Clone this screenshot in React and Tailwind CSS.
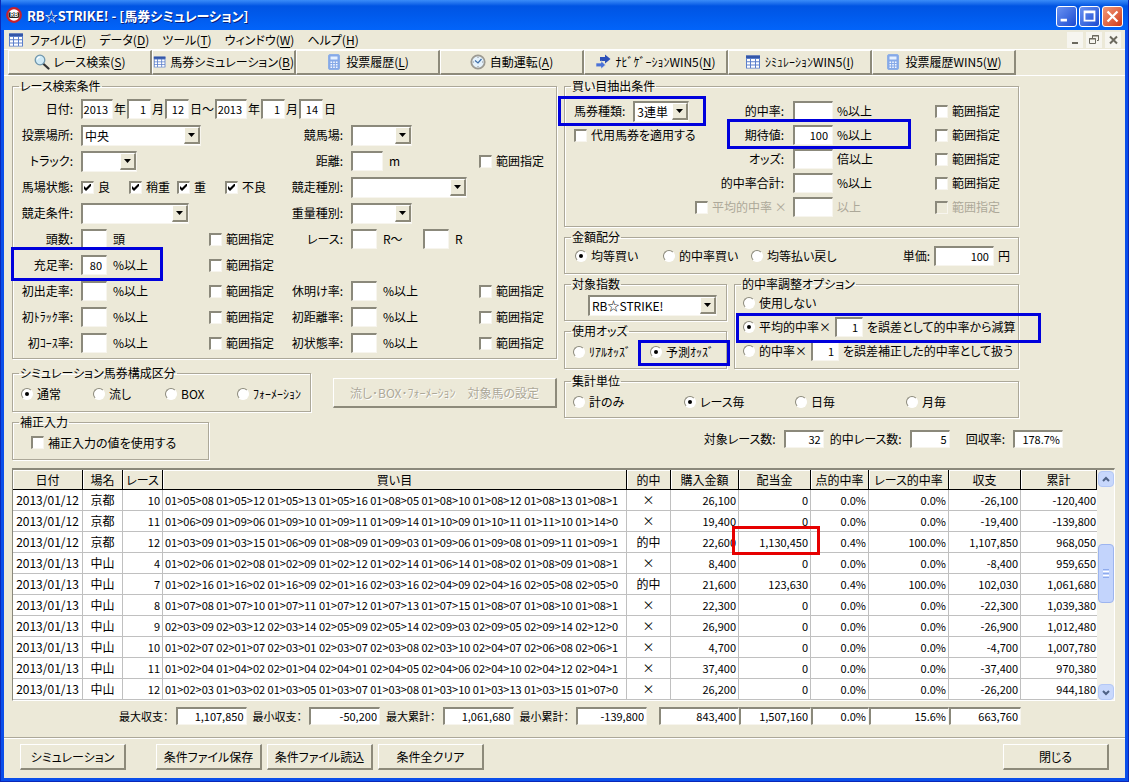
import { useId } from 'react';

const toolbar = [
  { text: 'レース検索', hotkey: 'S', icon: 'search' },
  { text: '馬券シミュレーション', hotkey: 'B', icon: 'grid' },
  { text: '投票履歴', hotkey: 'L', icon: 'calc' },
  { text: '自動運転', hotkey: 'A', icon: 'clock' },
  { text: 'ﾅﾋﾞｹﾞｰｼｮﾝWIN5', hotkey: 'N', icon: 'arrows' },
  { text: 'ｼﾐｭﾚｰｼｮﾝWIN5', hotkey: 'I', icon: 'grid' },
  { text: '投票履歴WIN5', hotkey: 'W', icon: 'calc' },
];

const menus = [
  ['ファイル', 'F'],
  ['データ', 'D'],
  ['ツール', 'T'],
  ['ウィンドウ', 'W'],
  ['ヘルプ', 'H'],
];

const rows = [
  ['2013/01/12', '京都', '10', '01>05>08 01>05>12 01>05>13 01>05>16 01>08>05 01>08>10 01>08>12 01>08>13 01>08>1', '×', '26,100', '0', '0.0%', '0.0%', '-26,100', '-120,400'],
  ['2013/01/12', '京都', '11', '01>06>09 01>09>06 01>09>10 01>09>11 01>09>14 01>10>09 01>10>11 01>11>10 01>14>0', '×', '19,400', '0', '0.0%', '0.0%', '-19,400', '-139,800'],
  ['2013/01/12', '京都', '12', '01>03>09 01>03>15 01>06>09 01>08>09 01>09>03 01>09>06 01>09>08 01>09>11 01>09>1', '的中', '22,600', '1,130,450', '0.4%', '100.0%', '1,107,850', '968,050'],
  ['2013/01/13', '中山', '4', '01>02>06 01>02>08 01>02>09 01>02>12 01>02>14 01>06>14 01>08>02 01>08>09 01>08>1', '×', '8,400', '0', '0.0%', '0.0%', '-8,400', '959,650'],
  ['2013/01/13', '中山', '7', '01>02>16 01>16>02 01>16>09 02>01>16 02>03>16 02>04>09 02>04>16 02>05>08 02>05>0', '的中', '21,600', '123,630', '0.4%', '100.0%', '102,030', '1,061,680'],
  ['2013/01/13', '中山', '8', '01>07>08 01>07>10 01>07>11 01>07>12 01>07>13 01>07>15 01>08>07 01>08>10 01>08>1', '×', '22,300', '0', '0.0%', '0.0%', '-22,300', '1,039,380'],
  ['2013/01/13', '中山', '9', '02>03>09 02>03>12 02>03>14 02>05>09 02>05>14 02>09>03 02>09>05 02>09>14 02>12>0', '×', '26,900', '0', '0.0%', '0.0%', '-26,900', '1,012,480'],
  ['2013/01/13', '中山', '10', '01>02>07 02>01>07 02>03>01 02>03>07 02>03>08 02>03>10 02>04>07 02>06>08 02>06>1', '×', '4,700', '0', '0.0%', '0.0%', '-4,700', '1,007,780'],
  ['2013/01/13', '中山', '11', '01>02>04 01>04>02 02>01>04 02>04>01 02>04>05 02>04>06 02>04>10 02>04>12 02>04>1', '×', '37,400', '0', '0.0%', '0.0%', '-37,400', '970,380'],
  ['2013/01/13', '中山', '12', '01>02>03 01>03>02 01>03>05 01>03>07 01>03>08 01>03>10 01>03>13 01>03>15 01>07>0', '×', '26,200', '0', '0.0%', '0.0%', '-26,200', '944,180'],
];

const columns = [
  ['日付', 'w-[70px]'],
  ['場名', 'w-[40px]'],
  ['レース', 'w-[40px]'],
  ['買い目', ''],
  ['的中', 'w-[44px]'],
  ['購入金額', 'w-[68px]'],
  ['配当金', 'w-[72px]'],
  ['点的中率', 'w-[58px]'],
  ['レース的中率', 'w-[80px]'],
  ['収支', 'w-[72px]'],
  ['累計', 'w-[76px]'],
];

const raised =
  'bg-[#ece9d8] border-t border-l border-white border-r-2 border-b-2 border-r-[#8d8a7a] border-b-[#8d8a7a]';
const sunken =
  'bg-white border-t-2 border-l-2 border-t-[#8b897b] border-l-[#8b897b] border-r border-b border-r-[#f7f5ee] border-b-[#f7f5ee]';

function Icon({ name }) {
  if (name === 'search')
    return (
      <svg viewBox="0 0 16 16" className="h-4 w-4">
        <path d="M9 9.500l5.500 5" stroke="#333" strokeWidth="2.200" strokeLinecap="round" />
        <circle cx="6" cy="6" r="4.800" fill="#cfeaf6" stroke="#6f96ad" strokeWidth="1.300" />
        <path d="M3.200 5.500a3 3 0 0 1 3-2.500" stroke="#fff" strokeWidth="1.200" fill="none" />
      </svg>
    );
  if (name === 'grid')
    return (
      <svg viewBox="0 0 16 16" className="h-4 w-4">
        <rect x="1" y="1.500" width="14" height="13" fill="#5b7fcb" />
        <rect x="1" y="1.500" width="14" height="2.500" fill="#3457a8" />
        <g fill="#fff">
          <path d="M2 5h3v2.300H2zM6 5h4v2.300H6zM11 5h3v2.300h-3z" />
          <path d="M2 8.200h3v2.300H2zM6 8.200h4v2.300H6zM11 8.200h3v2.300h-3z" />
          <path d="M2 11.400h3v2.300H2zM6 11.400h4v2.300H6zM11 11.400h3v2.300h-3z" />
        </g>
      </svg>
    );
  if (name === 'calc')
    return (
      <svg viewBox="0 0 16 16" className="h-4 w-4">
        <rect x="2.500" y=".5" width="11" height="15" rx="1.500" fill="#86a9e8" stroke="#8fb0e6" />
        <rect x="4.500" y="2.500" width="7" height="3" fill="#e6f1ff" />
        <g fill="#f4f8ff">
          <path d="M4.500 7.500h1.600v1.500H4.500zM7.200 7.500h1.600v1.500H7.200zM9.900 7.500h1.600v1.500H9.900z" />
          <path d="M4.500 10h1.600v1.500H4.500zM7.200 10h1.600v1.500H7.200zM9.900 10h1.600v1.500H9.900z" />
          <path d="M4.500 12.500h1.600v1.500H4.500zM7.200 12.500h1.600v1.500H7.200zM9.900 12.500h1.600v1.500H9.900z" />
        </g>
      </svg>
    );
  if (name === 'clock')
    return (
      <svg viewBox="0 0 16 16" className="h-4 w-4">
        <circle cx="8" cy="8" r="6.700" fill="#e4f1fb" stroke="#9c9a92" strokeWidth="1.800" />
        <path d="M5 6.500L8 9l3.500-4" fill="none" stroke="#3d6ea8" strokeWidth="1.200" />
        <path d="M8 2.800v1M8 12.200v1M2.800 8h1M12.200 8h1" stroke="#777" />
      </svg>
    );
  return (
    <svg viewBox="0 0 16 16" className="h-4 w-4">
      <path d="M5 3h5V.5l5.500 4.500L10 9.500V7H5z" fill="#2c50b8" />
      <path d="M1 9h5V6.800l4.500 4.100L6 15v-2.200H1z" fill="#4a72d8" stroke="#ece9d8" strokeWidth=".6" />
    </svg>
  );
}

function Hotkey({ text, hotkey }) {
  return (
    <span className="whitespace-nowrap">
      {text}(<u className="underline-offset-2">{hotkey}</u>)
    </span>
  );
}

function Group({ title, className = '', children }) {
  return (
    <fieldset
      className={`min-w-0 border border-[#aca899] px-0 shadow-[1px_1px_0_#fff,inset_1px_1px_0_#fff] ${className}`}
    >
      <legend className="ml-1.5 px-px leading-3">{title}</legend>
      {children}
    </fieldset>
  );
}

function Mark({ className }) {
  return <span aria-hidden="true" className={`pointer-events-none absolute z-10 border-[3px] ${className}`} />;
}

function Box({ id, label, value = '', className = 'w-[26px]' }) {
  return (
    <input
      id={id}
      aria-label={label}
      type="text"
      defaultValue={value}
      className={`h-5 shrink-0 pr-1 pb-0.5 text-right text-[11px] outline-none ${sunken} ${className}`}
    />
  );
}

function Combo({ id, label, value = '', className }) {
  return (
    <span className={`grid h-[21px] ${className}`}>
      <select
        id={id}
        aria-label={label}
        defaultValue={value}
        className={`col-start-1 row-start-1 h-[21px] appearance-none pl-0.5 outline-none ${sunken}`}
      >
        <option value={value}>{value}</option>
      </select>
      <span
        className={`pointer-events-none col-start-1 row-start-1 my-0.5 mr-px flex w-4 items-center justify-center justify-self-end ${raised}`}
      >
        <svg viewBox="0 0 7 4" className="h-1 w-[7px]">
          <path d="M0 0h7L3.500 4z" />
        </svg>
      </span>
    </span>
  );
}

function Check({ label, checked, disabled, className = '', boxClass = '' }) {
  return (
    <label className={`flex items-center gap-1 whitespace-nowrap ${disabled ? 'text-[#aca899]' : ''} ${className}`}>
      <span className="grid place-items-center">
        <input
          type="checkbox"
          defaultChecked={checked}
          disabled={disabled}
          className={`peer col-start-1 row-start-1 h-[13px] w-[13px] appearance-none ${sunken} ${boxClass}`}
        />
        <svg
          viewBox="0 0 7 7"
          className="pointer-events-none invisible col-start-1 row-start-1 h-[7px] w-[7px] peer-checked:visible"
        >
          <path d="M0 2v3l2 2 5-5V-1L2 4z" />
        </svg>
      </span>
      {label}
    </label>
  );
}

function Radio({ name, label, checked, children, className = '' }) {
  const id = useId();
  return (
    <span className={`flex items-center gap-1 whitespace-nowrap ${className}`}>
      <span className="grid place-items-center">
        <input
          id={id}
          type="radio"
          name={name}
          defaultChecked={checked}
          className="peer col-start-1 row-start-1 h-3 w-3 appearance-none rounded-full border border-t-[#8b897b] border-r-white border-b-white border-l-[#8b897b] bg-white"
        />
        <span className="pointer-events-none invisible col-start-1 row-start-1 h-1 w-1 rounded-full bg-black peer-checked:visible" />
      </span>
      <label htmlFor={id}>{label}</label>
      {children}
    </span>
  );
}

function Label({ htmlFor, children, className = '' }) {
  return (
    <label htmlFor={htmlFor} className={`text-right whitespace-nowrap ${className}`}>
      {children}
    </label>
  );
}

function Unit({ children }) {
  return <span className="whitespace-nowrap">{children}</span>;
}

// label + number box + unit, followed by the range tick box
function Rate({ label, unit = '%以上', value, width, gap = 'gap-1.5', mark }) {
  const id = useId();
  return (
    <>
      <div className="relative flex justify-end">
        <Label htmlFor={id}>{label}:</Label>
        {mark}
      </div>
      <div className={`flex items-center ${gap}`}>
        <Box id={id} value={value} className={width} />
        <Unit>{unit}</Unit>
      </div>
      <Check label="範囲指定" />
    </>
  );
}

function SearchConditions() {
  return (
    <Group title="レース検索条件">
      <div className="grid auto-rows-[26px] grid-cols-[60px_120px_68px_58px_120px_1fr] items-center gap-x-2 pt-1 pb-0.5">
        <Label htmlFor="year-from">日付:</Label>
        <div className="col-span-5 flex items-center gap-px">
          <Box id="year-from" value="2013" className="w-8" />
          <Unit>年</Unit>
          <Box label="開始月" value="1" className="w-6" />
          <Unit>月</Unit>
          <Box label="開始日" value="12" className="w-6" />
          <Unit>日～</Unit>
          <Box label="終了年" value="2013" className="w-8" />
          <Unit>年</Unit>
          <Box label="終了月" value="1" className="w-6" />
          <Unit>月</Unit>
          <Box label="終了日" value="14" className="w-6" />
          <Unit>日</Unit>
        </div>

        <Label htmlFor="place">投票場所:</Label>
        <Combo id="place" value="中央" className="w-[120px]" />
        <Label htmlFor="course" className="col-span-2">競馬場:</Label>
        <Combo id="course" className="col-span-2 w-[61px]" />

        <Label htmlFor="track">トラック:</Label>
        <Combo id="track" className="col-span-2 w-14" />
        <Rate label="距離" unit="m" width="w-8" />

        <span className="text-right whitespace-nowrap">馬場状態:</span>
        <div className="col-span-2 flex">
          <Check label="良" checked className="w-12" />
          <Check label="稍重" checked className="w-12" />
          <Check label="重" checked className="w-12" />
          <Check label="不良" checked className="w-12" />
        </div>
        <Label htmlFor="class">競走種別:</Label>
        <Combo id="class" className="col-span-2 w-[116px]" />

        <Label htmlFor="terms">競走条件:</Label>
        <Combo id="terms" className="col-span-2 w-[108px]" />
        <Label htmlFor="weight">重量種別:</Label>
        <Combo id="weight" className="col-span-2 w-[61px]" />

        <Rate label="頭数" unit="頭" />
        <Label htmlFor="race-from">レース:</Label>
        <div className="col-span-2 flex items-center gap-1.5">
          <Box id="race-from" />
          <span className="w-[34px] whitespace-nowrap">R～</span>
          <Box label="終了レース" />
          <Unit>R</Unit>
        </div>

        <Rate
          label="充足率"
          value="80"
          mark={<Mark className="-top-2.5 -left-0.5 h-[34px] w-[152px] border-[#0000dc]" />}
        />
        <span className="col-span-3" />

        <Rate label="初出走率" />
        <Rate label="休明け率" />
        <Rate label="初ﾄﾗｯｸ率" />
        <Rate label="初距離率" />
        <Rate label="初ｺｰｽ率" />
        <Rate label="初状態率" />
      </div>
    </Group>
  );
}

function BetConditions() {
  return (
    <Group title="買い目抽出条件" className="mr-[98px]">
      <div className="flex py-[7px]">
        <div className="w-[130px] pl-[9px]">
          <div className="relative flex h-6 items-center gap-2 whitespace-nowrap">
            <label htmlFor="bet-type">馬券種類:</label>
            <Combo id="bet-type" value="3連単" className="w-14" />
            <Mark className="-top-[3px] -left-4 h-[30px] w-[148px] border-[#0000dc]" />
          </div>
          <Check label="代用馬券を適用する" className="h-6" />
        </div>
        <div className="grid flex-1 auto-rows-[24px] grid-cols-[89px_133px_1fr] items-center gap-x-[9px]">
          <Rate label="的中率" width="w-10" gap="gap-1" />
          <Rate
            label="期待値"
            value="100"
            width="w-10"
            gap="gap-1"
            mark={<Mark className="-top-2 left-8 h-[30px] w-[184px] border-[#0000dc]" />}
          />
          <Rate label="オッズ" unit="倍以上" width="w-10" gap="gap-1" />
          <Rate label="的中率合計" width="w-10" gap="gap-1" />
          <Check label="平均的中率 ×" disabled />
          <div className="flex items-center gap-1 text-[#aca899]">
            <Box label="平均的中率の倍率" className="w-10" />
            <Unit>以上</Unit>
          </div>
          <Check label="範囲指定" disabled boxClass="disabled:bg-[#ece9d8]" />
        </div>
      </div>
    </Group>
  );
}

function Adjustment() {
  return (
    <Group title="的中率調整オプション" className="flex-1">
      <div className="pt-px pl-2">
        <Radio name="adjust" label="使用しない" className="h-6" />
        <div className="relative">
          <Radio name="adjust" label="平均的中率×" checked className="h-6">
            <Box label="減算する誤差" value="1" className="w-7" />
            <Unit>を誤差として的中率から減算</Unit>
          </Radio>
          <Mark className="-top-0.5 -left-[7px] h-[30px] w-[305px] border-[#0000dc]" />
        </div>
        <Radio name="adjust" label="的中率×" className="h-6">
          <Box label="誤差補正の倍率" value="1" className="w-7" />
          <Unit>を誤差補正した的中率として扱う</Unit>
        </Radio>
      </div>
    </Group>
  );
}

function Results() {
  return (
    <div className="flex border-t-2 border-r border-b border-l border-t-[#8b897b] border-r-white border-b-white border-l-[#8b897b] bg-white">
      <table className="w-full table-fixed border-separate border-spacing-0">
        <thead>
          <tr className="h-5">
            {columns.map(([name, width]) => (
              <th
                key={name}
                className={`border-r border-b border-black bg-[#ece9d8] p-0 text-center leading-4 font-normal whitespace-nowrap shadow-[inset_1px_1px_0_#fff] ${width}`}
              >
                {name}
              </th>
            ))}
          </tr>
        </thead>
        <tbody>
          {rows.map((row, r) => (
            <tr key={r} className="h-[21px]">
              {row.map((cell, c) => (
                <td
                  key={c}
                  className={`border-b border-[#c0c0c0] py-0 leading-4 whitespace-nowrap ${
                    c === 10 ? 'pr-px pl-0.5' : 'border-r px-0.5'
                  } ${c < 2 || c === 4 ? 'text-center' : c === 3 ? 'overflow-hidden text-[11px]' : 'text-right text-[11px]'} ${
                    cell === '1,130,450' ? 'relative' : ''
                  }`}
                >
                  {cell}
                  {cell === '1,130,450' && <Mark className="-top-1.5 -left-[7px] h-[29px] w-[88px] border-[#e60000]" />}
                </td>
              ))}
            </tr>
          ))}
        </tbody>
      </table>
      <div className="flex w-[17px] shrink-0 flex-col bg-[#f3f2ea] pt-px">
        <ScrollButton label="上へ" path="M1 5l3-3 3 3" />
        <div className="flex flex-1 flex-col pl-px">
          <div className="h-[29%]" />
          <div className="flex h-[30%] flex-col items-center justify-center gap-px rounded-sm border border-[#9db5ef] bg-[#c3d4fc]">
            <span className="h-px w-1.5 bg-[#8fabed]" />
            <span className="h-px w-1.5 bg-white" />
            <span className="h-px w-1.5 bg-[#8fabed]" />
            <span className="h-px w-1.5 bg-white" />
            <span className="h-px w-1.5 bg-[#8fabed]" />
          </div>
        </div>
        <ScrollButton label="下へ" path="M1 2l3 3 3-3" />
      </div>
    </div>
  );
}

function ScrollButton({ label, path }) {
  return (
    <button
      type="button"
      aria-label={label}
      className="ml-px flex h-4 w-4 items-center justify-center rounded-sm border border-[#b4c8f6] bg-[#c8d8fc]"
    >
      <svg viewBox="0 0 8 7" className="h-[7px] w-2">
        <path d={path} fill="none" stroke="#4d6185" strokeWidth="2" />
      </svg>
    </button>
  );
}

function Total({ label, value }) {
  const id = useId();
  return (
    <div className="flex items-center gap-[7px]">
      <label htmlFor={id} className="text-[11px] whitespace-nowrap">{label}：</label>
      <Readout id={id} value={value} className="w-[71px]" />
    </div>
  );
}

function Readout({ id, label, value, className }) {
  return (
    <input
      id={id}
      aria-label={label}
      readOnly
      value={value}
      className={`h-[18px] shrink-0 pr-0.5 pb-px text-right text-[11px] outline-none ${sunken} ${className}`}
    />
  );
}

function Stat({ label, value, className }) {
  const id = useId();
  return (
    <div className="flex items-center gap-2">
      <label htmlFor={id} className="whitespace-nowrap">{label}:</label>
      <Readout id={id} value={value} className={className} />
    </div>
  );
}

function PushButton({ children, className = '' }) {
  return (
    <button type="button" className={`h-[26px] w-[106px] whitespace-nowrap ${raised} ${className}`}>
      {children}
    </button>
  );
}

function TitleBar() {
  const base = 'flex h-[21px] w-[21px] items-center justify-center rounded-[3px] border border-white';
  return (
    <header className="flex h-[30px] items-center bg-linear-to-b from-[#3a8cf8] via-[#0054e3] via-20% to-[#0264fa] px-[5px] text-white">
      <svg viewBox="0 0 16 16" className="h-4 w-4">
        <circle cx="8" cy="8" r="6.800" fill="#fff" stroke="#c8202c" strokeWidth="2.200" />
        <rect x="2.500" y="5" width="11" height="6" rx="2" fill="#222" />
        <text x="8" y="10" fontSize="6" fontWeight="bold" textAnchor="middle" fill="#fff">RB</text>
      </svg>
      <h1 className="ml-[5px] flex-1 pt-0.5 text-[13px] font-bold whitespace-nowrap [text-shadow:1px_1px_0_#0a1f7a]">
        RB☆STRIKE! - [馬券シミュレーション]
      </h1>
      <div className="flex gap-0.5 pt-0.5">
        <button type="button" aria-label="最小化" className={`${base} bg-linear-to-br from-[#6a92f2] to-[#1c48d0]`}>
          <svg viewBox="0 0 21 21" className="h-full w-full"><path d="M4 13h7v3H4z" fill="#fff" /></svg>
        </button>
        <button type="button" aria-label="元に戻す" className={`${base} bg-linear-to-br from-[#6a92f2] to-[#1c48d0]`}>
          <svg viewBox="0 0 21 21" className="h-full w-full">
            <path d="M4 4h13v12H4zM6 7v7h9V7z" fill="#fff" fillRule="evenodd" />
          </svg>
        </button>
        <button type="button" aria-label="閉じる" className={`${base} bg-linear-to-br from-[#f09878] to-[#cf3510]`}>
          <svg viewBox="0 0 21 21" className="h-full w-full">
            <path d="M5 5l11 11M16 5L5 16" stroke="#fff" strokeWidth="2.500" />
          </svg>
        </button>
      </div>
    </header>
  );
}

function MenuBar() {
  const base = 'flex h-4 w-4 items-center justify-center bg-[#f6f5ef]';
  return (
    <nav className="flex h-[19px] items-center px-1">
      <Icon name="grid" />
      <div className="ml-1.5 flex flex-1 gap-[13px]">
        {menus.map(([text, hotkey]) => (
          <button key={hotkey} type="button">
            <Hotkey text={text} hotkey={hotkey} />
          </button>
        ))}
      </div>
      <div className="flex gap-[3px]">
        <button type="button" aria-label="子画面を最小化" className={base}>
          <svg viewBox="0 0 16 16" className="h-4 w-4"><path d="M5 10h6v2H5z" fill="#6b695e" /></svg>
        </button>
        <button type="button" aria-label="子画面を元に戻す" className={base}>
          <svg viewBox="0 0 16 16" className="h-4 w-4" fill="none" stroke="#6b695e">
            <path d="M6.500 6V3.500h6v5H11M6 4h7M3.500 6.500h6v5h-6zM3 7h7" />
          </svg>
        </button>
        <button type="button" aria-label="子画面を閉じる" className={base}>
          <svg viewBox="0 0 16 16" className="h-4 w-4">
            <path d="M5 4.500l7 7M12 4.500l-7 7" stroke="#6b695e" strokeWidth="2" />
          </svg>
        </button>
      </div>
    </nav>
  );
}

export default function App() {
  return (
    <div className="flex min-h-screen flex-col border-x border-b border-[#0a28b8] bg-[#0a4eea] font-['Noto_Sans_CJK_JP','Liberation_Sans',sans-serif] text-xs leading-4 text-black [font-feature-settings:'palt']">
      <TitleBar />
      <div className="mx-[3px] mb-[3px] flex flex-1 flex-col bg-[#ece9d8]">
        <MenuBar />
        <div className="flex border-t border-b border-white pl-1">
          {toolbar.map((item) => (
            <button
              key={item.text}
              type="button"
              className={`flex h-[25px] w-36 items-center justify-center gap-1 ${raised}`}
            >
              <Icon name={item.icon} />
              <Hotkey text={item.text} hotkey={item.hotkey} />
            </button>
          ))}
        </div>

        <main className="flex flex-1 flex-col px-2 pt-1">
          <div className="grid grid-cols-[545fr_553fr] gap-x-[7px]">
            <div>
              <SearchConditions />
              <div className="mt-2 flex items-end justify-between">
                <Group title="シミュレーション馬券構成区分" className="w-[299px]">
                  <div className="flex h-8 items-center pb-0.5 pl-2">
                    <Radio name="kind" label="通常" checked className="w-[72px]" />
                    <Radio name="kind" label="流し" className="w-[72px]" />
                    <Radio name="kind" label="BOX" className="w-[72px]" />
                    <Radio name="kind" label="ﾌｫｰﾒｰｼｮﾝ" />
                  </div>
                </Group>
                <button
                  type="button"
                  disabled
                  className={`mb-1 h-[30px] w-[224px] text-[#aca899] [text-shadow:1px_1px_0_#fff] ${raised}`}
                >
                  流し･BOX･ﾌｫｰﾒｰｼｮﾝ　対象馬の設定
                </button>
              </div>
              <Group title="補正入力" className="mt-1 w-[197px]">
                <div className="flex h-[31px] items-center pb-0.5 pl-[18px]">
                  <Check label="補正入力の値を使用する" />
                </div>
              </Group>
            </div>

            <div className="flex flex-col gap-1">
              <BetConditions />
              <Group title="金額配分" className="mr-[98px]">
                <div className="flex h-[30px] items-center pb-1 pl-2.5">
                  <Radio name="money" label="均等買い" checked className="w-[88px]" />
                  <Radio name="money" label="的中率買い" className="w-[88px]" />
                  <Radio name="money" label="均等払い戻し" />
                  <div className="ml-auto flex items-center gap-1 pr-2">
                    <label htmlFor="unit-price">単価:</label>
                    <Box id="unit-price" value="100" className="w-[60px]" />
                    <Unit>円</Unit>
                  </div>
                </div>
              </Group>
              <div className="mr-[98px] flex gap-[7px]">
                <div className="flex w-[163px] flex-col gap-1">
                  <Group title="対象指数">
                    <div className="flex h-[30px] items-center pl-[23px]">
                      <Combo label="対象指数" value="RB☆STRIKE!" className="w-[129px]" />
                    </div>
                  </Group>
                  <Group title="使用オッズ">
                    <div className="flex h-[31px] items-center pb-0.5 pl-2">
                      <Radio name="odds" label="ﾘｱﾙｵｯｽﾞ" className="w-[77px]" />
                      <div className="relative">
                        <Radio name="odds" label="予測ｵｯｽﾞ" checked />
                        <Mark className="-top-1 -left-3 h-[26px] w-[92px] border-[#0000dc]" />
                      </div>
                    </div>
                  </Group>
                </div>
                <Adjustment />
              </div>
              <Group title="集計単位" className="mt-0.5 mr-[98px]">
                <div className="flex h-[30px] items-center pl-2">
                  <Radio name="total" label="計のみ" className="w-[111px]" />
                  <Radio name="total" label="レース毎" checked className="w-[111px]" />
                  <Radio name="total" label="日毎" className="w-[111px]" />
                  <Radio name="total" label="月毎" />
                </div>
              </Group>
              <div className="mt-2 flex justify-end gap-1.5 pr-[54px]">
                <Stat label="対象レース数" value="32" className="w-10" />
                <Stat label="的中レース数" value="5" className="w-10" />
                <div className="pl-2.5">
                  <Stat label="回収率" value="178.7%" className="w-[50px]" />
                </div>
              </div>
            </div>
          </div>

          <div className="mt-2 mr-0.5">
            <Results />
          </div>

          <div className="mt-1.5 flex items-center justify-end pr-24">
            <div className="flex gap-1.5">
              <Total label="最大収支" value="1,107,850" />
              <Total label="最小収支" value="-50,200" />
              <Total label="最大累計" value="1,061,680" />
              <Total label="最小累計" value="-139,800" />
            </div>
            <div className="ml-3 flex">
              <Readout label="購入金額合計" value="843,400" className="w-20" />
              <Readout label="配当金合計" value="1,507,160" className="w-[72px]" />
              <Readout label="点的中率合計" value="0.0%" className="w-[58px]" />
              <Readout label="レース的中率合計" value="15.6%" className="w-20" />
              <Readout label="収支合計" value="663,760" className="w-[72px]" />
            </div>
          </div>
        </main>

        <footer className="mt-3 flex gap-[5px] border-t border-[#aca899] px-4 pt-1.5 pb-2 shadow-[inset_0_1px_0_#fff]">
          <PushButton className="mr-[25px]">シミュレーション</PushButton>
          <PushButton>条件ファイル保存</PushButton>
          <PushButton>条件ファイル読込</PushButton>
          <PushButton>条件全クリア</PushButton>
          <PushButton className="ml-auto">閉じる</PushButton>
        </footer>
      </div>
    </div>
  );
}
